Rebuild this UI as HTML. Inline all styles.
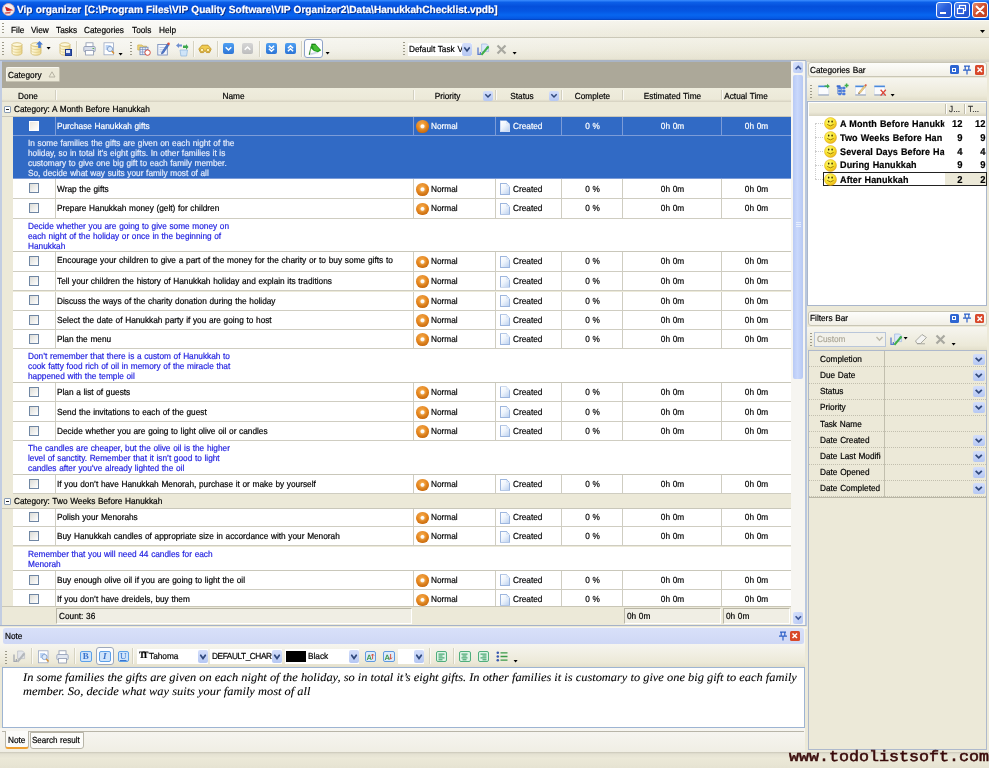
<!DOCTYPE html><html><head><meta charset="utf-8"><title>Vip organizer</title><style>
*{box-sizing:border-box;margin:0;padding:0}
html,body{width:989px;height:768px;overflow:hidden;background:#ECE9D8}
body{text-rendering:geometricPrecision;font-family:"Liberation Sans",sans-serif;font-size:8.8px;color:#000;position:relative;line-height:1}
.ab{position:absolute}
.t{position:absolute;white-space:nowrap;line-height:12px;height:12px;transform:scaleX(.94);transform-origin:0 50%;word-spacing:.4px;-webkit-text-stroke:.2px currentColor}
.c{text-align:center}
.t.c{transform-origin:50% 50%}
.t.r{text-align:right;transform-origin:100% 50%}
.nt{display:block;transform:scaleX(.94);transform-origin:0 0;word-spacing:.4px;-webkit-text-stroke:.2px currentColor}
.w{color:#fff}
.row{position:absolute;left:11px;width:778px;background:#fff;border-bottom:1px solid #CFCDC1}
.sel{background:#316AC5;color:#fff;border-bottom-color:#7C9CD8}
.vl{position:absolute;top:0;bottom:0;width:1px;background:#CFCDC1}
.sel .vl{background:#7C9CD8}
.cb{position:absolute;left:15.5px;width:10px;height:10px;border:1px solid #6F86A3;background:linear-gradient(135deg,#DCDCD7,#FFFFFF)}
.sel .cb{border-color:#fff;background:linear-gradient(135deg,#E8E6DF,#FFFFFF)}
.note{position:absolute;left:11px;width:778px;background:#fff;border-bottom:1px solid #C9C7BA;color:#1F1FE0;padding:2.4px 0 0 15px;line-height:10.05px;white-space:pre}
.note.sel{background:#316AC5;color:#E6ECFA;border-bottom-color:#7C9CD8}
.grp{position:absolute;left:0px;width:789px;background:#ECE9D8;border-bottom:1px solid #C9C7BA}
.pm{position:absolute;left:1.8px;top:3.6px;width:7px;height:7px;border:1px solid #8A9DB5;background:#fff;border-radius:1px}
.pm:after{content:"";position:absolute;left:1px;right:1px;top:2px;height:1px;background:#222}
.pri{position:absolute;left:403.1px;width:12.7px;height:12.7px;border-radius:50%;background:linear-gradient(160deg,rgba(255,220,160,.35) 0,rgba(255,255,255,0) 45%,rgba(120,50,0,.28) 100%),radial-gradient(circle at 50% 49%,#fff 0,#fff 16%,#FBD8A8 21%,#F2A444 27%,#EA8C22 45%,#DE7A12 72%,#C86608 100%)}
.doc{position:absolute;left:487px;width:10px;height:12px;background:linear-gradient(135deg,#fff 0,#EEF4FC 45%,#BDD2F0 100%);border:1px solid #9DB6DE;clip-path:polygon(0 0,62% 0,100% 32%,100% 100%,0 100%)}
.doc:after{content:"";position:absolute;right:-1px;top:-1px;width:4px;height:4px;background:linear-gradient(45deg,#DCE8F8 50%,#9DB6DE 50%,#9DB6DE 62%,transparent 62%)}
.sel .doc{border-color:#D0DDF5}
.dd{position:absolute;width:10px;height:10px;background:linear-gradient(#D3DEFB,#B6C8F3);border-radius:2px}
.dd svg{position:absolute;left:0;top:0}
.sep{position:absolute;width:1px;background:#D6D3C2;box-shadow:1px 0 0 #FAF9F4}
.grip{position:absolute;width:1.6px;background-image:linear-gradient(#9C9988 45%,transparent 45%);background-size:2px 3px}
</style></head><body><div id="root" style="position:absolute;left:0;top:0;width:989px;height:768px;will-change:transform">
<div class="ab" style="left:0;top:0;width:989px;height:20px;background:linear-gradient(#3D8EFF 0,#2276F4 6%,#0C5FE8 12%,#044FDB 32%,#0556E2 55%,#0766F0 75%,#0558E4 92%,#0340B8 100%)"></div>
<svg class="ab" style="left:2px;top:3px" width="13" height="13" viewBox="0 0 13 13"><circle cx="6.5" cy="6.5" r="6" fill="#F4ECEC" stroke="#D8A8A8" stroke-width=".9"/><path d="M3 3.6 L11.4 7.2 L4.6 8.2 Z" fill="#D02020"/><path d="M2.6 9.6 L9 8.6 L8 10.6 L3.4 10.8 Z" fill="#C83030" opacity=".8"/></svg>
<div class="t w" id="title" style="left:17px;top:3.9px;font-weight:bold;font-size:10.3px;line-height:14px;height:14px;text-shadow:1px 1px 0 #0A2A80;transform:scaleX(.982)">Vip organizer [C:\Program Files\VIP Quality Software\VIP Organizer2\Data\HanukkahChecklist.vpdb]</div>
<div class="ab" style="left:935.5px;top:1.5px;width:16px;height:16px;border:1px solid #fff;border-radius:3px;background:linear-gradient(135deg,#5C8EF0 0,#2C60DC 45%,#2250C8 100%);opacity:.97"></div>
<div class="ab" style="left:953.5px;top:1.5px;width:16px;height:16px;border:1px solid #fff;border-radius:3px;background:linear-gradient(135deg,#5C8EF0 0,#2C60DC 45%,#2250C8 100%);opacity:.97"></div>
<div class="ab" style="left:971.5px;top:1.5px;width:16px;height:16px;border:1px solid #fff;border-radius:3px;background:linear-gradient(135deg,#E8906C 0,#D8502A 45%,#C43C18 100%);opacity:.97"></div>
<div class="ab" style="left:939.5px;top:11.5px;width:6px;height:2.4px;background:#fff"></div>
<svg class="ab" style="left:956px;top:4px" width="11" height="11" viewBox="0 0 11 11"><rect x="3.5" y="1.5" width="6" height="5" fill="none" stroke="#fff" stroke-width="1.2"/><rect x="1.5" y="4.5" width="6" height="5" fill="#2C60DC" stroke="#fff" stroke-width="1.2"/></svg>
<svg class="ab" style="left:974.5px;top:4.5px" width="10" height="10" viewBox="0 0 10 10"><path d="M1.5 1.5 L8.5 8.5 M8.5 1.5 L1.5 8.5" stroke="#fff" stroke-width="1.9" stroke-linecap="round"/></svg>
<div class="ab" style="left:0;top:19.6px;width:989px;height:18.4px;background:linear-gradient(#FFFFFF 0,rgba(255,255,255,.35) 8%,rgba(255,255,255,0) 60%,rgba(200,190,150,.08) 100%),linear-gradient(90deg,#F8F8F4 0,#F5F4EE 35%,#F0EEE2 65%,#ECE9D8 100%);border-bottom:1px solid #CBC8B8"></div>
<div class="grip" style="left:2px;top:23px;height:12px"></div>
<div class="t" style="left:11px;top:23.5px">File</div>
<div class="t" style="left:31px;top:23.5px">View</div>
<div class="t" style="left:56px;top:23.5px">Tasks</div>
<div class="t" style="left:84px;top:23.5px">Categories</div>
<div class="t" style="left:132px;top:23.5px">Tools</div>
<div class="t" style="left:159px;top:23.5px">Help</div>
<svg class="ab" style="left:980px;top:30px" width="6" height="4"><path d="M0 0 L5 0 L2.5 3 Z" fill="#000"/></svg>
<div class="ab" style="left:0;top:38px;width:989px;height:20.6px;background:linear-gradient(rgba(255,255,255,.3) 0,rgba(255,255,255,0) 50%,rgba(190,180,140,.16) 100%),linear-gradient(90deg,#F6F5EF 0,#F3F2EA 35%,#EFEDE0 65%,#ECE9D8 100%)"></div>
<div class="ab" style="left:0;top:58.6px;width:989px;height:3.4px;background:linear-gradient(#E0DDCD,#D2CFC2)"></div><div class="ab" style="left:0;top:60.4px;width:806px;height:1.6px;background:#A9B4C6"></div>
<div class="grip" style="left:2px;top:42px;height:14px"></div>
<div class="grip" style="left:130px;top:42px;height:14px"></div>
<div class="grip" style="left:403px;top:42px;height:14px"></div>
<div class="sep" style="left:76px;top:41px;height:16px"></div>
<div class="sep" style="left:192.5px;top:41px;height:16px"></div>
<div class="sep" style="left:216.5px;top:41px;height:16px"></div>
<div class="sep" style="left:259px;top:41px;height:16px"></div>
<div class="sep" style="left:301px;top:41px;height:16px"></div>
<svg width="0" height="0" style="position:absolute"><defs><linearGradient id="dbg" x1="0" x2="1"><stop offset="0" stop-color="#FFFBE6"/><stop offset=".45" stop-color="#F8EDBE"/><stop offset="1" stop-color="#EBD58A"/></linearGradient></defs></svg>
<svg class="ab" style="left:10.5px;top:42px" width="12" height="14" viewBox="0 0 12 14"><path d="M1 2.5 V11 C1 12.3 3.2 13.2 6 13.2 S11 12.3 11 11 V2.5 Z" fill="url(#dbg)" stroke="#D2B96A" stroke-width=".8"/><ellipse cx="6" cy="2.6" rx="5" ry="1.9" fill="#FDF8DC" stroke="#D2B96A" stroke-width=".8"/><path d="M1 5.5 C1 6.8 3.2 7.6 6 7.6 S11 6.8 11 5.5 M1 8.3 C1 9.6 3.2 10.4 6 10.4 S11 9.6 11 8.3" fill="none" stroke="#DCC67C" stroke-width=".6"/></svg>
<svg class="ab" style="left:29.5px;top:42px" width="12" height="14" viewBox="0 0 12 14"><path d="M1 2.5 V11 C1 12.3 3.2 13.2 6 13.2 S11 12.3 11 11 V2.5 Z" fill="url(#dbg)" stroke="#D2B96A" stroke-width=".8"/><ellipse cx="6" cy="2.6" rx="5" ry="1.9" fill="#FDF8DC" stroke="#D2B96A" stroke-width=".8"/><path d="M1 5.5 C1 6.8 3.2 7.6 6 7.6 S11 6.8 11 5.5 M1 8.3 C1 9.6 3.2 10.4 6 10.4 S11 9.6 11 8.3" fill="none" stroke="#DCC67C" stroke-width=".6"/></svg>
<svg class="ab" style="left:58.5px;top:42px" width="12" height="14" viewBox="0 0 12 14"><path d="M1 2.5 V11 C1 12.3 3.2 13.2 6 13.2 S11 12.3 11 11 V2.5 Z" fill="url(#dbg)" stroke="#D2B96A" stroke-width=".8"/><ellipse cx="6" cy="2.6" rx="5" ry="1.9" fill="#FDF8DC" stroke="#D2B96A" stroke-width=".8"/><path d="M1 5.5 C1 6.8 3.2 7.6 6 7.6 S11 6.8 11 5.5 M1 8.3 C1 9.6 3.2 10.4 6 10.4 S11 9.6 11 8.3" fill="none" stroke="#DCC67C" stroke-width=".6"/></svg>
<svg class="ab" style="left:35.5px;top:41px" width="7" height="7"><path d="M3.5 0 L7 3.5 L4.8 3.5 L4.8 7 L2.2 7 L2.2 3.5 L0 3.5 Z" fill="#4A7CD4"/></svg>
<svg class="ab" style="left:46px;top:47px" width="6" height="4"><path d="M0.6 0 L4.6 0 L2.6 2.6 Z" fill="#000"/></svg>
<div class="ab" style="left:64.5px;top:49px;width:7px;height:7px;background:#3556B0;border:1px solid #1E3A8C"></div><div class="ab" style="left:66px;top:50px;width:4px;height:2.5px;background:#E4EAF8"></div>
<svg class="ab" style="left:82.5px;top:42px" width="13" height="14" viewBox="0 0 13 14"><rect x="3" y="0.8" width="7" height="4" fill="#fff" stroke="#8A96AE" stroke-width=".8"/><rect x="0.8" y="4.5" width="11.4" height="5.2" rx="1" fill="#D8DEEA" stroke="#8A96B0" stroke-width=".8"/><rect x="2.6" y="8.5" width="7.8" height="4.5" fill="#fff" stroke="#8A96AE" stroke-width=".8"/><rect x="9.5" y="6" width="1.6" height="1" fill="#58B048"/></svg>
<svg class="ab" style="left:102.5px;top:42px" width="12" height="14" viewBox="0 0 12 14"><rect x="1" y="0.8" width="9.5" height="12" fill="#fff" stroke="#9AA8C4" stroke-width=".8"/><rect x="2.6" y="3" width="5" height="5" fill="#BCD4F4"/><circle cx="7" cy="7" r="2.6" fill="#DDEBFB" stroke="#7E9CCB" stroke-width=".9"/><path d="M8.8 9 L11 11.6" stroke="#D89030" stroke-width="1.5"/></svg>
<svg class="ab" style="left:118px;top:52.5px" width="6" height="4"><path d="M0.6 0 L4.6 0 L2.6 2.6 Z" fill="#000"/></svg>
<svg class="ab" style="left:137px;top:42px" width="14" height="14" viewBox="0 0 14 14"><path d="M0.8 3 H5 L6 4.2 H9.5 V8 H0.8 Z" fill="#F5DC7A" stroke="#C9A94A" stroke-width=".7"/><rect x="3" y="5.2" width="8" height="7.5" fill="#E7EEF9" stroke="#6E86B8" stroke-width=".8"/><path d="M3 7.5 H11 M5.6 5.2 V12.7 M8.3 5.2 V12.7 M3 10 H11" stroke="#6E86B8" stroke-width=".6"/><circle cx="10.6" cy="10.6" r="2.7" fill="#fff" stroke="#D23C2C" stroke-width=".9"/></svg>
<svg class="ab" style="left:156.5px;top:42px" width="13" height="14" viewBox="0 0 13 14"><rect x="0.8" y="2.5" width="9.5" height="10.5" fill="#F3F6FC" stroke="#6E86B8" stroke-width=".8"/><path d="M2.5 5.5 H8 M2.5 7.7 H7 M2.5 9.9 H6" stroke="#A9BCDD" stroke-width=".7"/><path d="M4.8 10.2 L10.6 1.6 L12.2 2.8 L6.4 11.2 L4.4 12 Z" fill="#4E78CC" stroke="#2C4C98" stroke-width=".5"/><circle cx="11.6" cy="1.8" r="1.2" fill="#E05038"/></svg>
<svg class="ab" style="left:174.5px;top:41.5px" width="14" height="15" viewBox="0 0 14 15"><path d="M5 8 H12.5 L11.6 14 H5.9 Z" fill="#CFE4F8" stroke="#8CB4DC" stroke-width=".7"/><path d="M1 3.5 L4 1 L4 2.6 L7 2.6 L7 4.6 L4 4.6 L4 6 Z" fill="#6F8ED0"/><path d="M8 3.5 L11 3.5 L11 2 L13.5 5 L11 7.8 L11 6 L8 6 Z" fill="#3DA84C"/></svg>
<svg class="ab" style="left:198px;top:44px" width="14" height="10" viewBox="0 0 14 10"><path d="M0.8 5 L4 1.2 H10 L13.2 5 L11.5 8.6 H8.5 L7 6.4 L5.5 8.6 H2.5 Z" fill="#F1CC50" stroke="#B98A1C" stroke-width=".8"/><circle cx="4" cy="6" r="1.7" fill="#FFF0B0" stroke="#B98A1C" stroke-width=".6"/><circle cx="10" cy="6" r="1.7" fill="#FFF0B0" stroke="#B98A1C" stroke-width=".6"/></svg>
<div class="ab" style="left:223px;top:43.3px;width:11px;height:11px;border-radius:2px;background:linear-gradient(#4FA0F2,#2C74D6)"></div>
<svg class="ab" style="left:223px;top:43.3px" width="11" height="11" viewBox="0 0 11 11"><path d="M2.7 4.2 L5.5 7 L8.3 4.2" fill="none" stroke="#fff" stroke-width="1.5"/></svg>
<div class="ab" style="left:242px;top:43.3px;width:11px;height:11px;border-radius:2px;background:linear-gradient(#D6D6D6,#BDBDBD)"></div>
<svg class="ab" style="left:242px;top:43.3px" width="11" height="11" viewBox="0 0 11 11"><path d="M2.7 6.8 L5.5 4 L8.3 6.8" fill="none" stroke="#fff" stroke-width="1.5"/></svg>
<div class="ab" style="left:266px;top:43.3px;width:11px;height:11px;border-radius:2px;background:linear-gradient(#4FA0F2,#2C74D6)"></div>
<svg class="ab" style="left:266px;top:43.3px" width="11" height="11" viewBox="0 0 11 11"><path d="M2.9 2.8 L5.5 5.3 L8.1 2.8 M2.9 5.8 L5.5 8.3 L8.1 5.8" fill="none" stroke="#fff" stroke-width="1.5"/></svg>
<div class="ab" style="left:284.5px;top:43.3px;width:11px;height:11px;border-radius:2px;background:linear-gradient(#4FA0F2,#2C74D6)"></div>
<svg class="ab" style="left:284.5px;top:43.3px" width="11" height="11" viewBox="0 0 11 11"><path d="M2.9 5.2 L5.5 2.7 L8.1 5.2 M2.9 8.2 L5.5 5.7 L8.1 8.2" fill="none" stroke="#fff" stroke-width="1.5"/></svg>
<div class="ab" style="left:304.2px;top:39.2px;width:18.6px;height:18.5px;border:1px solid #8FA3C8;border-radius:3px;background:#FDFDFE"></div>
<svg class="ab" style="left:307.5px;top:42px" width="14" height="14" viewBox="0 0 14 14"><path d="M2.3 13.4 L10.4 11 L10 10 L2.7 11.6 Z" fill="#D8E0EC"/><path d="M2.6 11.8 L9.8 9.8" stroke="#B8C4D8" stroke-width=".6"/><path d="M3.5 2.1 L7.5 2.1 L13.2 8.2 L10 10.2 L5.9 9 L2.6 5.9 Z" fill="#22A01E"/><path d="M4.4 3 L7.2 2.8 L11.6 7.8 L9.6 9 L6.2 8 Z" fill="#52C43C" opacity=".8"/><path d="M3.5 2.1 L7.5 2.1" stroke="#14600F" stroke-width=".8"/><path d="M3.3 2.3 L0.7 12.6 L2 13 L2.9 6.2 Z" fill="#2F8C2A"/></svg>
<svg class="ab" style="left:324.7px;top:52px" width="6" height="4"><path d="M0.6 0 L4.6 0 L2.6 2.6 Z" fill="#000"/></svg>
<div class="ab" style="left:408px;top:42.5px;width:64px;height:13.5px;background:#fff"></div>
<div class="t" style="left:409px;top:42.6px;width:56.5px;overflow:hidden">Default Task V</div>
<div class="dd" style="left:462px;top:43px;width:10px;height:12.5px;opacity:1"><svg width="10" height="12.5" viewBox="0 0 10 10" preserveAspectRatio="none"><path d="M2.3 3.5 L5 6.3 L7.7 3.5" fill="none" stroke="#31497C" stroke-width="1.5"/></svg></div>
<svg class="ab" style="left:477px;top:42.5px" width="13" height="13" viewBox="0 0 13 13"><path d="M4.6 1 H9.6 L11.6 3 V8.6 H4.6 Z" fill="#DCE8FA" stroke="#9CB4E0" stroke-width=".7"/><path d="M1 4.6 V11.4 H3.4 V9" fill="none" stroke="#5C7CD0" stroke-width="1.3"/><path d="M3.6 11.2 L9.8 3.8 L11.4 5.2 L5.2 12.4 Z" fill="#3FAE4A"/><circle cx="10.8" cy="4.2" r="1.2" fill="#3FAE4A"/></svg>
<svg class="ab" style="left:496px;top:43.5px" width="11" height="11" viewBox="0 0 11 11"><path d="M1.5 1.5 L9.5 9.5 M9.5 1.5 L1.5 9.5" stroke="#A8A8A0" stroke-width="2.2"/></svg>
<svg class="ab" style="left:512px;top:52px" width="6" height="4"><path d="M0.6 0 L4.6 0 L2.6 2.6 Z" fill="#000"/></svg>
<div class="ab" style="left:0;top:61px;width:1.8px;height:565px;background:#C2CDE2"></div>
<div class="ab" style="left:2px;top:62px;width:789px;height:26px;background:#ACA899"></div>
<div class="ab" style="left:6px;top:67px;width:54px;height:15px;background:#ECE9D8;border:1px solid #F8F7F0;border-right-color:#C6C3B2;border-bottom-color:#C6C3B2;border-radius:2px"></div>
<div class="t" style="left:8px;top:69px">Category</div>
<svg class="ab" style="left:47.5px;top:70.5px" width="8" height="7"><path d="M4 0.8 L7 6 L1 6 Z" fill="none" stroke="#B5B2A3" stroke-width="1"/></svg>
<div class="ab" style="left:2px;top:88px;width:789px;height:14px;background:linear-gradient(#EFEDDE 0,#ECE9D8 80%,#E0DCCB 92%,#D3CFBF 100%)"></div>
<div class="ab" style="left:54.7px;top:90px;width:1px;height:10px;background:#D2CFC0;box-shadow:1px 0 0 #FBFAF6"></div>
<div class="ab" style="left:412.8px;top:90px;width:1px;height:10px;background:#D2CFC0;box-shadow:1px 0 0 #FBFAF6"></div>
<div class="ab" style="left:494.8px;top:90px;width:1px;height:10px;background:#D2CFC0;box-shadow:1px 0 0 #FBFAF6"></div>
<div class="ab" style="left:561.3px;top:90px;width:1px;height:10px;background:#D2CFC0;box-shadow:1px 0 0 #FBFAF6"></div>
<div class="ab" style="left:622.3px;top:90px;width:1px;height:10px;background:#D2CFC0;box-shadow:1px 0 0 #FBFAF6"></div>
<div class="ab" style="left:721.3px;top:90px;width:1px;height:10px;background:#D2CFC0;box-shadow:1px 0 0 #FBFAF6"></div>
<div class="t c" style="left:2px;width:52px;top:89.5px">Done</div>
<div class="t c" style="left:54px;width:359px;top:89.5px">Name</div>
<div class="t c" style="left:413px;width:69px;top:89.5px">Priority</div>
<div class="t c" style="left:495px;width:54px;top:89.5px">Status</div>
<div class="t c" style="left:562px;width:61px;top:89.5px">Complete</div>
<div class="t c" style="left:623px;width:99px;top:89.5px">Estimated Time</div>
<div class="t c" style="left:722px;width:48px;top:89.5px">Actual Time</div>
<div class="dd" style="left:483px;top:91px;width:10px;height:9.5px;opacity:1"><svg width="10" height="9.5" viewBox="0 0 10 10" preserveAspectRatio="none"><path d="M2.3 3.5 L5 6.3 L7.7 3.5" fill="none" stroke="#31497C" stroke-width="1.5"/></svg></div>
<div class="dd" style="left:549px;top:91px;width:10px;height:9.5px;opacity:1"><svg width="10" height="9.5" viewBox="0 0 10 10" preserveAspectRatio="none"><path d="M2.3 3.5 L5 6.3 L7.7 3.5" fill="none" stroke="#31497C" stroke-width="1.5"/></svg></div>
<div class="ab" style="left:2px;top:102.5px;width:789px;height:503.5px;overflow:hidden;background:#ECE9D8">
<div class="grp" style="top:0.0px;height:14.8px"><div class="pm"></div><div class="t" style="left:12px;top:0.9px">Category: A Month Before Hanukkah</div></div>
<div class="row sel" style="top:14.8px;height:18.4px"><div class="cb" style="top:3.4px"></div><div class="vl" style="left:41.7px"></div><div class="vl" style="left:399.8px"></div><div class="vl" style="left:481.8px"></div><div class="vl" style="left:548.3px"></div><div class="vl" style="left:609.3px"></div><div class="vl" style="left:708.3px"></div><div class="t" style="left:44px;top:2.7px">Purchase Hanukkah gifts</div><div class="pri" style="top:3.0px"></div><div class="t" style="left:418px;top:2.7px">Normal</div><div class="doc" style="top:3.1px"></div><div class="t" style="left:500px;top:2.7px">Created</div><div class="t c" style="left:549px;width:61px;top:2.7px">0 %</div><div class="t c" style="left:610px;width:99px;top:2.7px">0h 0m</div><div class="t c" style="left:709px;width:69px;top:2.7px">0h 0m</div></div>
<div class="note sel" style="top:33.2px;height:43.5px"><span class="nt">In some families the gifts are given on each night of the
holiday, so in total it’s eight gifts. In other families it is
customary to give one big gift to each family member.
So, decide what way suits your family most of all</span></div>
<div class="row" style="top:76.7px;height:19.8px"><div class="cb" style="top:4.1px"></div><div class="vl" style="left:41.7px"></div><div class="vl" style="left:399.8px"></div><div class="vl" style="left:481.8px"></div><div class="vl" style="left:548.3px"></div><div class="vl" style="left:609.3px"></div><div class="vl" style="left:708.3px"></div><div class="t" style="left:44px;top:3.4px">Wrap the gifts</div><div class="pri" style="top:3.7px"></div><div class="t" style="left:418px;top:3.4px">Normal</div><div class="doc" style="top:3.8px"></div><div class="t" style="left:500px;top:3.4px">Created</div><div class="t c" style="left:549px;width:61px;top:3.4px">0 %</div><div class="t c" style="left:610px;width:99px;top:3.4px">0h 0m</div><div class="t c" style="left:709px;width:69px;top:3.4px">0h 0m</div></div>
<div class="row" style="top:96.5px;height:19.5px"><div class="cb" style="top:4.0px"></div><div class="vl" style="left:41.7px"></div><div class="vl" style="left:399.8px"></div><div class="vl" style="left:481.8px"></div><div class="vl" style="left:548.3px"></div><div class="vl" style="left:609.3px"></div><div class="vl" style="left:708.3px"></div><div class="t" style="left:44px;top:3.2px">Prepare Hanukkah money (gelt) for children</div><div class="pri" style="top:3.5px"></div><div class="t" style="left:418px;top:3.2px">Normal</div><div class="doc" style="top:3.7px"></div><div class="t" style="left:500px;top:3.2px">Created</div><div class="t c" style="left:549px;width:61px;top:3.2px">0 %</div><div class="t c" style="left:610px;width:99px;top:3.2px">0h 0m</div><div class="t c" style="left:709px;width:69px;top:3.2px">0h 0m</div></div>
<div class="note" style="top:116.0px;height:33.6px"><span class="nt">Decide whether you are going to give some money on
each night of the holiday or once in the beginning of
Hanukkah</span></div>
<div class="row" style="top:149.6px;height:19.8px"><div class="cb" style="top:4.1px"></div><div class="vl" style="left:41.7px"></div><div class="vl" style="left:399.8px"></div><div class="vl" style="left:481.8px"></div><div class="vl" style="left:548.3px"></div><div class="vl" style="left:609.3px"></div><div class="vl" style="left:708.3px"></div><div class="t" style="left:44px;top:2.2px;transform:scaleX(.9493)">Encourage your children to give a part of the money for the charity or to buy some gifts to</div><div class="pri" style="top:3.7px"></div><div class="t" style="left:418px;top:3.4px">Normal</div><div class="doc" style="top:3.8px"></div><div class="t" style="left:500px;top:3.4px">Created</div><div class="t c" style="left:549px;width:61px;top:3.4px">0 %</div><div class="t c" style="left:610px;width:99px;top:3.4px">0h 0m</div><div class="t c" style="left:709px;width:69px;top:3.4px">0h 0m</div></div>
<div class="row" style="top:169.4px;height:19.6px"><div class="cb" style="top:4.0px"></div><div class="vl" style="left:41.7px"></div><div class="vl" style="left:399.8px"></div><div class="vl" style="left:481.8px"></div><div class="vl" style="left:548.3px"></div><div class="vl" style="left:609.3px"></div><div class="vl" style="left:708.3px"></div><div class="t" style="left:44px;top:3.3px">Tell your children the history of Hanukkah holiday and explain its traditions</div><div class="pri" style="top:3.6px"></div><div class="t" style="left:418px;top:3.3px">Normal</div><div class="doc" style="top:3.7px"></div><div class="t" style="left:500px;top:3.3px">Created</div><div class="t c" style="left:549px;width:61px;top:3.3px">0 %</div><div class="t c" style="left:610px;width:99px;top:3.3px">0h 0m</div><div class="t c" style="left:709px;width:69px;top:3.3px">0h 0m</div></div>
<div class="row" style="top:189.0px;height:19.2px"><div class="cb" style="top:3.8px"></div><div class="vl" style="left:41.7px"></div><div class="vl" style="left:399.8px"></div><div class="vl" style="left:481.8px"></div><div class="vl" style="left:548.3px"></div><div class="vl" style="left:609.3px"></div><div class="vl" style="left:708.3px"></div><div class="t" style="left:44px;top:3.1px">Discuss the ways of the charity donation during the holiday</div><div class="pri" style="top:3.4px"></div><div class="t" style="left:418px;top:3.1px">Normal</div><div class="doc" style="top:3.5px"></div><div class="t" style="left:500px;top:3.1px">Created</div><div class="t c" style="left:549px;width:61px;top:3.1px">0 %</div><div class="t c" style="left:610px;width:99px;top:3.1px">0h 0m</div><div class="t c" style="left:709px;width:69px;top:3.1px">0h 0m</div></div>
<div class="row" style="top:208.2px;height:19.3px"><div class="cb" style="top:3.9px"></div><div class="vl" style="left:41.7px"></div><div class="vl" style="left:399.8px"></div><div class="vl" style="left:481.8px"></div><div class="vl" style="left:548.3px"></div><div class="vl" style="left:609.3px"></div><div class="vl" style="left:708.3px"></div><div class="t" style="left:44px;top:3.2px">Select the date of Hanukkah party if you are going to host</div><div class="pri" style="top:3.5px"></div><div class="t" style="left:418px;top:3.2px">Normal</div><div class="doc" style="top:3.6px"></div><div class="t" style="left:500px;top:3.2px">Created</div><div class="t c" style="left:549px;width:61px;top:3.2px">0 %</div><div class="t c" style="left:610px;width:99px;top:3.2px">0h 0m</div><div class="t c" style="left:709px;width:69px;top:3.2px">0h 0m</div></div>
<div class="row" style="top:227.5px;height:18.9px"><div class="cb" style="top:3.6px"></div><div class="vl" style="left:41.7px"></div><div class="vl" style="left:399.8px"></div><div class="vl" style="left:481.8px"></div><div class="vl" style="left:548.3px"></div><div class="vl" style="left:609.3px"></div><div class="vl" style="left:708.3px"></div><div class="t" style="left:44px;top:2.9px">Plan the menu</div><div class="pri" style="top:3.2px"></div><div class="t" style="left:418px;top:2.9px">Normal</div><div class="doc" style="top:3.3px"></div><div class="t" style="left:500px;top:2.9px">Created</div><div class="t c" style="left:549px;width:61px;top:2.9px">0 %</div><div class="t c" style="left:610px;width:99px;top:2.9px">0h 0m</div><div class="t c" style="left:709px;width:69px;top:2.9px">0h 0m</div></div>
<div class="note" style="top:246.4px;height:33.9px"><span class="nt">Don’t remember that there is a custom of Hanukkah to
cook fatty food rich of oil in memory of the miracle that
happened with the temple oil</span></div>
<div class="row" style="top:280.3px;height:19.5px"><div class="cb" style="top:4.0px"></div><div class="vl" style="left:41.7px"></div><div class="vl" style="left:399.8px"></div><div class="vl" style="left:481.8px"></div><div class="vl" style="left:548.3px"></div><div class="vl" style="left:609.3px"></div><div class="vl" style="left:708.3px"></div><div class="t" style="left:44px;top:3.2px">Plan a list of guests</div><div class="pri" style="top:3.5px"></div><div class="t" style="left:418px;top:3.2px">Normal</div><div class="doc" style="top:3.7px"></div><div class="t" style="left:500px;top:3.2px">Created</div><div class="t c" style="left:549px;width:61px;top:3.2px">0 %</div><div class="t c" style="left:610px;width:99px;top:3.2px">0h 0m</div><div class="t c" style="left:709px;width:69px;top:3.2px">0h 0m</div></div>
<div class="row" style="top:299.8px;height:19.6px"><div class="cb" style="top:4.0px"></div><div class="vl" style="left:41.7px"></div><div class="vl" style="left:399.8px"></div><div class="vl" style="left:481.8px"></div><div class="vl" style="left:548.3px"></div><div class="vl" style="left:609.3px"></div><div class="vl" style="left:708.3px"></div><div class="t" style="left:44px;top:3.3px">Send the invitations to each of the guest</div><div class="pri" style="top:3.6px"></div><div class="t" style="left:418px;top:3.3px">Normal</div><div class="doc" style="top:3.7px"></div><div class="t" style="left:500px;top:3.3px">Created</div><div class="t c" style="left:549px;width:61px;top:3.3px">0 %</div><div class="t c" style="left:610px;width:99px;top:3.3px">0h 0m</div><div class="t c" style="left:709px;width:69px;top:3.3px">0h 0m</div></div>
<div class="row" style="top:319.4px;height:19.0px"><div class="cb" style="top:3.7px"></div><div class="vl" style="left:41.7px"></div><div class="vl" style="left:399.8px"></div><div class="vl" style="left:481.8px"></div><div class="vl" style="left:548.3px"></div><div class="vl" style="left:609.3px"></div><div class="vl" style="left:708.3px"></div><div class="t" style="left:44px;top:3.0px">Decide whether you are going to light olive oil or candles</div><div class="pri" style="top:3.3px"></div><div class="t" style="left:418px;top:3.0px">Normal</div><div class="doc" style="top:3.4px"></div><div class="t" style="left:500px;top:3.0px">Created</div><div class="t c" style="left:549px;width:61px;top:3.0px">0 %</div><div class="t c" style="left:610px;width:99px;top:3.0px">0h 0m</div><div class="t c" style="left:709px;width:69px;top:3.0px">0h 0m</div></div>
<div class="note" style="top:338.4px;height:34.3px"><span class="nt">The candles are cheaper, but the olive oil is the higher
level of sanctity. Remember that it isn’t good to light
candles after you’ve already lighted the oil</span></div>
<div class="row" style="top:372.7px;height:19.1px"><div class="cb" style="top:3.8px"></div><div class="vl" style="left:41.7px"></div><div class="vl" style="left:399.8px"></div><div class="vl" style="left:481.8px"></div><div class="vl" style="left:548.3px"></div><div class="vl" style="left:609.3px"></div><div class="vl" style="left:708.3px"></div><div class="t" style="left:44px;top:3.1px">If you don’t have Hanukkah Menorah, purchase it or make by yourself</div><div class="pri" style="top:3.4px"></div><div class="t" style="left:418px;top:3.1px">Normal</div><div class="doc" style="top:3.5px"></div><div class="t" style="left:500px;top:3.1px">Created</div><div class="t c" style="left:549px;width:61px;top:3.1px">0 %</div><div class="t c" style="left:610px;width:99px;top:3.1px">0h 0m</div><div class="t c" style="left:709px;width:69px;top:3.1px">0h 0m</div></div>
<div class="grp" style="top:391.8px;height:14.4px"><div class="pm"></div><div class="t" style="left:12px;top:0.7px">Category: Two Weeks Before Hanukkah</div></div>
<div class="row" style="top:406.2px;height:18.5px"><div class="cb" style="top:3.5px"></div><div class="vl" style="left:41.7px"></div><div class="vl" style="left:399.8px"></div><div class="vl" style="left:481.8px"></div><div class="vl" style="left:548.3px"></div><div class="vl" style="left:609.3px"></div><div class="vl" style="left:708.3px"></div><div class="t" style="left:44px;top:2.8px">Polish your Menorahs</div><div class="pri" style="top:3.1px"></div><div class="t" style="left:418px;top:2.8px">Normal</div><div class="doc" style="top:3.2px"></div><div class="t" style="left:500px;top:2.8px">Created</div><div class="t c" style="left:549px;width:61px;top:2.8px">0 %</div><div class="t c" style="left:610px;width:99px;top:2.8px">0h 0m</div><div class="t c" style="left:709px;width:69px;top:2.8px">0h 0m</div></div>
<div class="row" style="top:424.7px;height:19.3px"><div class="cb" style="top:3.8px"></div><div class="vl" style="left:41.7px"></div><div class="vl" style="left:399.8px"></div><div class="vl" style="left:481.8px"></div><div class="vl" style="left:548.3px"></div><div class="vl" style="left:609.3px"></div><div class="vl" style="left:708.3px"></div><div class="t" style="left:44px;top:3.1px">Buy Hanukkah candles of appropriate size in accordance with your Menorah</div><div class="pri" style="top:3.4px"></div><div class="t" style="left:418px;top:3.1px">Normal</div><div class="doc" style="top:3.5px"></div><div class="t" style="left:500px;top:3.1px">Created</div><div class="t c" style="left:549px;width:61px;top:3.1px">0 %</div><div class="t c" style="left:610px;width:99px;top:3.1px">0h 0m</div><div class="t c" style="left:709px;width:69px;top:3.1px">0h 0m</div></div>
<div class="note" style="top:444.0px;height:24.0px"><span class="nt">Remember that you will need 44 candles for each
Menorah</span></div>
<div class="row" style="top:468.0px;height:19.5px"><div class="cb" style="top:4.0px"></div><div class="vl" style="left:41.7px"></div><div class="vl" style="left:399.8px"></div><div class="vl" style="left:481.8px"></div><div class="vl" style="left:548.3px"></div><div class="vl" style="left:609.3px"></div><div class="vl" style="left:708.3px"></div><div class="t" style="left:44px;top:3.2px">Buy enough olive oil if you are going to light the oil</div><div class="pri" style="top:3.5px"></div><div class="t" style="left:418px;top:3.2px">Normal</div><div class="doc" style="top:3.7px"></div><div class="t" style="left:500px;top:3.2px">Created</div><div class="t c" style="left:549px;width:61px;top:3.2px">0 %</div><div class="t c" style="left:610px;width:99px;top:3.2px">0h 0m</div><div class="t c" style="left:709px;width:69px;top:3.2px">0h 0m</div></div>
<div class="row" style="top:487.5px;height:19.5px"><div class="cb" style="top:4.0px"></div><div class="vl" style="left:41.7px"></div><div class="vl" style="left:399.8px"></div><div class="vl" style="left:481.8px"></div><div class="vl" style="left:548.3px"></div><div class="vl" style="left:609.3px"></div><div class="vl" style="left:708.3px"></div><div class="t" style="left:44px;top:3.2px">If you don’t have dreidels, buy them</div><div class="pri" style="top:3.5px"></div><div class="t" style="left:418px;top:3.2px">Normal</div><div class="doc" style="top:3.7px"></div><div class="t" style="left:500px;top:3.2px">Created</div><div class="t c" style="left:549px;width:61px;top:3.2px">0 %</div><div class="t c" style="left:610px;width:99px;top:3.2px">0h 0m</div><div class="t c" style="left:709px;width:69px;top:3.2px">0h 0m</div></div>
</div>
<div class="ab" style="left:2px;top:606px;width:789px;height:19px;background:#ECE9D8;border-top:1px solid #C9C6B6"></div>
<div class="ab" style="left:56px;top:607.6px;width:356px;height:16px;border:1px solid #B9B6A6;border-right-color:#fff;border-bottom-color:#fff;background:#F0EEE4"></div>
<div class="t" style="left:59px;top:609.6px">Count: 36</div>
<div class="ab" style="left:624px;top:607.6px;width:97px;height:16px;border:1px solid #B9B6A6;border-right-color:#fff;border-bottom-color:#fff;background:#F0EEE4"></div>
<div class="t" style="left:627px;top:609.6px">0h 0m</div>
<div class="ab" style="left:723px;top:607.6px;width:67px;height:16px;border:1px solid #B9B6A6;border-right-color:#fff;border-bottom-color:#fff;background:#F0EEE4"></div>
<div class="t" style="left:726px;top:609.6px">0h 0m</div>
<div class="ab" style="left:791px;top:61px;width:14px;height:564px;background:#F6F5F1"></div>
<div class="ab" style="left:792.5px;top:75px;width:10.5px;height:303.5px;border-radius:2px;background:linear-gradient(90deg,#B9CAF5,#C9D8FC 45%,#B7C8F2)"></div>
<div class="ab" style="left:795.5px;top:222px;width:5px;height:6px;background-image:linear-gradient(#EEF4FE 50%,transparent 50%);background-size:5px 2px;opacity:.8"></div>
<div class="ab" style="left:792.5px;top:61.5px;width:10.5px;height:11.5px;border-radius:2px;background:linear-gradient(135deg,#D6E1FD,#B7C8F2)"></div>
<svg class="ab" style="left:792.5px;top:61.5px" width="11" height="13"><path d="M2.6 7.2 L5.3 4.4 L8 7.2" fill="none" stroke="#3E5694" stroke-width="1.6"/></svg>
<div class="ab" style="left:792.5px;top:612.3px;width:10.5px;height:11.5px;border-radius:2px;background:linear-gradient(135deg,#D6E1FD,#B7C8F2)"></div>
<svg class="ab" style="left:792.5px;top:612.3px" width="11" height="13"><path d="M2.6 4.2 L5.3 7 L8 4.2" fill="none" stroke="#3E5694" stroke-width="1.6"/></svg>
<div class="ab" style="left:804.5px;top:61px;width:2.5px;height:565px;background:#B9C7DE"></div>
<div class="ab" style="left:0;top:624.6px;width:806px;height:1.7px;background:#A5B2C8"></div>
<div class="ab" style="left:807.5px;top:62px;width:179px;height:15px;border:1px solid #C9C6B6;border-radius:3px;background:linear-gradient(#FDFDFB,#F1EFE6)"></div>
<div class="t" style="left:810px;top:63.8px">Categories Bar</div>
<div class="ab" style="left:949.5px;top:65px;width:9px;height:9px;border-radius:1.5px;background:#2F66D2"></div><div class="ab" style="left:952px;top:67.5px;width:4px;height:4px;border:1px solid #fff"></div>
<svg class="ab" style="left:962px;top:64.5px" width="10" height="10" viewBox="0 0 10 10"><path d="M2 1.2 H8 M3.2 1.2 V5 M6.8 1.2 V5 M1 5.2 H9 M5 5.2 V9.5" fill="none" stroke="#2F62C8" stroke-width="1.2"/></svg>
<div class="ab" style="left:974.5px;top:65px;width:9.5px;height:9.5px;border-radius:1.5px;background:#D8482A"></div><svg class="ab" style="left:974.5px;top:65px" width="10" height="10"><path d="M2.5 2.5 L7 7 M7 2.5 L2.5 7" stroke="#fff" stroke-width="1.5"/></svg>
<div class="ab" style="left:807px;top:78px;width:180px;height:22px;background:linear-gradient(#F6F5EF,#ECE9D8 80%,#E3DFCB)"></div>
<div class="grip" style="left:810.2px;top:84.6px;height:13px"></div>
<svg class="ab" style="left:818px;top:83px" width="13" height="13" viewBox="0 0 13 13"><rect x="0.4" y="2.8" width="10.4" height="9" fill="#FBFCFE" stroke="#D5DDEC" stroke-width=".6"/><rect x="0.3" y="2.6" width="10.6" height="1.6" fill="#4A8ADC"/><path d="M0.3 12 H10.9" stroke="#8C9CB8" stroke-width="1"/><path d="M6.5 3.2 H10" stroke="#3FAE4A" stroke-width="1.4"/><path d="M9 0.8 L11.8 3.2 L9 5.6 Z" fill="#3FAE4A"/></svg>
<svg class="ab" style="left:836px;top:83px" width="13" height="13" viewBox="0 0 13 13"><rect x="2.2" y="3.8" width="3.2" height="2.4" rx=".6" fill="#4C7CDC"/><rect x="2.2" y="6.8" width="3.2" height="2.4" rx=".6" fill="#4C7CDC"/><rect x="2.2" y="9.8" width="3.2" height="2.4" rx=".6" fill="#4C7CDC"/><rect x="6.2" y="3.8" width="3.2" height="2.4" rx=".6" fill="#4C7CDC"/><rect x="6.2" y="6.8" width="3.2" height="2.4" rx=".6" fill="#4C7CDC"/><rect x="6.2" y="9.8" width="3.2" height="2.4" rx=".6" fill="#4C7CDC"/><rect x="0.6" y="2.2" width="4" height="2" rx=".6" fill="#3C6CD0"/><path d="M5.4 4 V11 M1.8 4 V11" stroke="#3C6CD0" stroke-width=".7"/><path d="M8.6 2.6 H12.6 M10.6 0.6 V4.6" stroke="#3FAE4A" stroke-width="1.5"/></svg>
<svg class="ab" style="left:855.3px;top:83px" width="13" height="13" viewBox="0 0 13 13"><rect x="0.4" y="2.8" width="10.4" height="9" fill="#FBFCFE" stroke="#D5DDEC" stroke-width=".6"/><rect x="0.3" y="2.6" width="10.6" height="1.6" fill="#4A8ADC"/><path d="M0.3 12 H10.9" stroke="#8C9CB8" stroke-width="1"/><path d="M3.6 9.6 L9.6 2.2 L11 3.3 L5 10.6 Z" fill="#EBCB84" stroke="#B89040" stroke-width=".4"/><path d="M9.6 2.2 L10.6 1 L12 2.1 L11 3.3 Z" fill="#E0503C"/><path d="M3.6 9.6 L3.2 11.2 L5 10.6 Z" fill="#806040"/></svg>
<svg class="ab" style="left:874px;top:83px" width="13" height="13" viewBox="0 0 13 13"><rect x="0.4" y="2.8" width="10.4" height="9" fill="#FBFCFE" stroke="#D5DDEC" stroke-width=".6"/><rect x="0.3" y="2.6" width="10.6" height="1.6" fill="#4A8ADC"/><path d="M0.3 12 H10.9" stroke="#8C9CB8" stroke-width="1"/><path d="M6.6 6.8 L11.8 12.6 M11.8 6.8 L6.6 12.6" stroke="#DC4434" stroke-width="1.3"/></svg>
<svg class="ab" style="left:890.3px;top:93.5px" width="6" height="4"><path d="M0.6 0 L4.6 0 L2.6 2.6 Z" fill="#000"/></svg>
<div class="ab" style="left:807px;top:101.3px;width:180px;height:204.7px;background:#fff;border:1px solid #A9B6CB;border-left-width:1.6px;border-top-width:1.4px"></div>
<div class="ab" style="left:808.5px;top:102.5px;width:177.5px;height:13px;background:linear-gradient(#EFEDDE 0,#ECE9D8 70%,#D8D4C2 100%)"></div>
<div class="ab" style="left:944.5px;top:104px;width:1px;height:10px;background:#C0BDAC;box-shadow:1px 0 0 #fff"></div><div class="ab" style="left:963.5px;top:104px;width:1px;height:10px;background:#C0BDAC;box-shadow:1px 0 0 #fff"></div>
<div class="t" style="left:949px;top:103px;color:#333">J...</div><div class="t" style="left:968px;top:103px;color:#333">T...</div>
<div class="ab" style="left:814.6px;top:123px;width:0;height:56px;border-left:1px dotted #CDCDCD"></div>
<svg width="0" height="0" style="position:absolute"><defs><radialGradient id="smg" cx=".38" cy=".32" r=".75"><stop offset="0" stop-color="#FFFA78"/><stop offset=".55" stop-color="#F8E42C"/><stop offset="1" stop-color="#E8A818"/></radialGradient></defs></svg>
<div class="ab" style="left:815px;top:123.4px;width:8px;height:0;border-top:1px dotted #CDCDCD"></div>
<svg class="ab" style="left:824px;top:117.4px" width="13" height="13" viewBox="0 0 13 13"><circle cx="6.5" cy="6.5" r="6" fill="url(#smg)" stroke="#DCA81C" stroke-width=".5"/><ellipse cx="4.7" cy="4.6" rx=".8" ry="1.1" fill="#3A2C00"/><ellipse cx="8.1" cy="4.6" rx=".8" ry="1.1" fill="#3A2C00"/><path d="M3.2 7.4 Q6.4 10.4 9.6 7.4" fill="none" stroke="#8A6000" stroke-width=".8"/></svg>
<div class="t" style="left:840px;top:119.1px;width:110.6px;overflow:hidden;font-weight:bold;font-size:9.6px;letter-spacing:.12px">A Month Before Hanukk</div>
<div class="t r" style="left:945px;top:119.1px;width:17.5px;font-weight:bold;font-size:10px">12</div>
<div class="t r" style="left:962px;top:119.1px;width:23.5px;font-weight:bold;font-size:10px;overflow:hidden">12</div>
<div class="ab" style="left:815px;top:137.20000000000002px;width:8px;height:0;border-top:1px dotted #CDCDCD"></div>
<svg class="ab" style="left:824px;top:131.20000000000002px" width="13" height="13" viewBox="0 0 13 13"><circle cx="6.5" cy="6.5" r="6" fill="url(#smg)" stroke="#DCA81C" stroke-width=".5"/><ellipse cx="4.7" cy="4.6" rx=".8" ry="1.1" fill="#3A2C00"/><ellipse cx="8.1" cy="4.6" rx=".8" ry="1.1" fill="#3A2C00"/><path d="M3.2 7.4 Q6.4 10.4 9.6 7.4" fill="none" stroke="#8A6000" stroke-width=".8"/></svg>
<div class="t" style="left:840px;top:132.9px;width:110.6px;overflow:hidden;font-weight:bold;font-size:9.6px;letter-spacing:.12px">Two Weeks Before Han</div>
<div class="t r" style="left:945px;top:132.9px;width:17.5px;font-weight:bold;font-size:10px">9</div>
<div class="t r" style="left:962px;top:132.9px;width:23.5px;font-weight:bold;font-size:10px;overflow:hidden">9</div>
<div class="ab" style="left:815px;top:151.0px;width:8px;height:0;border-top:1px dotted #CDCDCD"></div>
<svg class="ab" style="left:824px;top:145.0px" width="13" height="13" viewBox="0 0 13 13"><circle cx="6.5" cy="6.5" r="6" fill="url(#smg)" stroke="#DCA81C" stroke-width=".5"/><ellipse cx="4.7" cy="4.6" rx=".8" ry="1.1" fill="#3A2C00"/><ellipse cx="8.1" cy="4.6" rx=".8" ry="1.1" fill="#3A2C00"/><path d="M3.2 7.4 Q6.4 10.4 9.6 7.4" fill="none" stroke="#8A6000" stroke-width=".8"/></svg>
<div class="t" style="left:840px;top:146.7px;width:110.6px;overflow:hidden;font-weight:bold;font-size:9.6px;letter-spacing:.12px">Several Days Before Ha</div>
<div class="t r" style="left:945px;top:146.7px;width:17.5px;font-weight:bold;font-size:10px">4</div>
<div class="t r" style="left:962px;top:146.7px;width:23.5px;font-weight:bold;font-size:10px;overflow:hidden">4</div>
<div class="ab" style="left:815px;top:164.8px;width:8px;height:0;border-top:1px dotted #CDCDCD"></div>
<svg class="ab" style="left:824px;top:158.8px" width="13" height="13" viewBox="0 0 13 13"><circle cx="6.5" cy="6.5" r="6" fill="url(#smg)" stroke="#DCA81C" stroke-width=".5"/><ellipse cx="4.7" cy="4.6" rx=".8" ry="1.1" fill="#3A2C00"/><ellipse cx="8.1" cy="4.6" rx=".8" ry="1.1" fill="#3A2C00"/><path d="M3.2 7.4 Q6.4 10.4 9.6 7.4" fill="none" stroke="#8A6000" stroke-width=".8"/></svg>
<div class="t" style="left:840px;top:160.1px;width:110.6px;overflow:hidden;font-weight:bold;font-size:9.6px;letter-spacing:.12px">During Hanukkah</div>
<div class="t r" style="left:945px;top:160.1px;width:17.5px;font-weight:bold;font-size:10px">9</div>
<div class="t r" style="left:962px;top:160.1px;width:23.5px;font-weight:bold;font-size:10px;overflow:hidden">9</div>
<div class="ab" style="left:815px;top:178.60000000000002px;width:8px;height:0;border-top:1px dotted #CDCDCD"></div>
<div class="ab" style="left:945px;top:173.10000000000002px;width:41px;height:12.5px;background:#ECE9D8"></div>
<div class="ab" style="left:822.5px;top:172.3px;width:164px;height:13.8px;border:1px solid #222"></div>
<svg class="ab" style="left:824px;top:172.60000000000002px" width="13" height="13" viewBox="0 0 13 13"><circle cx="6.5" cy="6.5" r="6" fill="url(#smg)" stroke="#DCA81C" stroke-width=".5"/><ellipse cx="4.7" cy="4.6" rx=".8" ry="1.1" fill="#3A2C00"/><ellipse cx="8.1" cy="4.6" rx=".8" ry="1.1" fill="#3A2C00"/><path d="M3.2 7.4 Q6.4 10.4 9.6 7.4" fill="none" stroke="#8A6000" stroke-width=".8"/></svg>
<div class="t" style="left:840px;top:174.6px;width:110.6px;overflow:hidden;font-weight:bold;font-size:9.6px;letter-spacing:.12px">After Hanukkah</div>
<div class="t r" style="left:945px;top:174.6px;width:17.5px;font-weight:bold;font-size:10px">2</div>
<div class="t r" style="left:962px;top:174.6px;width:23.5px;font-weight:bold;font-size:10px;overflow:hidden">2</div>
<div class="ab" style="left:807.5px;top:310.5px;width:179px;height:15px;border:1px solid #C9C6B6;border-radius:3px;background:linear-gradient(#FDFDFB,#F1EFE6)"></div>
<div class="t" style="left:810px;top:312.3px">Filters Bar</div>
<div class="ab" style="left:949.5px;top:313.5px;width:9px;height:9px;border-radius:1.5px;background:#2F66D2"></div><div class="ab" style="left:952px;top:316.0px;width:4px;height:4px;border:1px solid #fff"></div>
<svg class="ab" style="left:962px;top:313.0px" width="10" height="10" viewBox="0 0 10 10"><path d="M2 1.2 H8 M3.2 1.2 V5 M6.8 1.2 V5 M1 5.2 H9 M5 5.2 V9.5" fill="none" stroke="#2F62C8" stroke-width="1.2"/></svg>
<div class="ab" style="left:974.5px;top:313.5px;width:9.5px;height:9.5px;border-radius:1.5px;background:#D8482A"></div><svg class="ab" style="left:974.5px;top:313.5px" width="10" height="10"><path d="M2.5 2.5 L7 7 M7 2.5 L2.5 7" stroke="#fff" stroke-width="1.5"/></svg>
<div class="ab" style="left:807px;top:326.5px;width:180px;height:23px;background:linear-gradient(#F6F5EF,#ECE9D8 80%,#E3DFCB)"></div>
<div class="grip" style="left:810.2px;top:332.6px;height:13px"></div>
<div class="ab" style="left:814px;top:331.5px;width:71.5px;height:15px;border:1px solid #B9C6DA;background:#F2F1EA"></div>
<div class="t" style="left:817px;top:333px;color:#ACA899">Custom</div>
<svg class="ab" style="left:875px;top:335px" width="9" height="8"><path d="M1.5 2 L4.5 5.2 L7.5 2" fill="none" stroke="#BDBAAA" stroke-width="1.4"/></svg>
<svg class="ab" style="left:889.5px;top:332.5px" width="13" height="13" viewBox="0 0 13 13"><path d="M4.6 1 H9.6 L11.6 3 V8.6 H4.6 Z" fill="#DCE8FA" stroke="#9CB4E0" stroke-width=".7"/><path d="M1 4.6 V11.4 H3.4 V9" fill="none" stroke="#5C7CD0" stroke-width="1.3"/><path d="M3.6 11.2 L9.8 3.8 L11.4 5.2 L5.2 12.4 Z" fill="#3FAE4A"/><circle cx="10.8" cy="4.2" r="1.2" fill="#3FAE4A"/></svg>
<svg class="ab" style="left:903px;top:337px" width="6" height="4"><path d="M0.6 0 L4.6 0 L2.6 2.6 Z" fill="#000"/></svg>
<svg class="ab" style="left:914px;top:333px" width="14" height="12" viewBox="0 0 14 12"><path d="M1.5 8 L8 1.5 L12.5 4.5 L6.5 10.5 H3 Z" fill="#F4F4F2" stroke="#A0A098" stroke-width=".9"/><path d="M3 10.8 H11" stroke="#A0A098" stroke-width=".9"/></svg>
<svg class="ab" style="left:934.5px;top:333.5px" width="11" height="11" viewBox="0 0 11 11"><path d="M1.5 1.5 L9.5 9.5 M9.5 1.5 L1.5 9.5" stroke="#A8A8A0" stroke-width="2.2"/></svg>
<svg class="ab" style="left:951px;top:342.5px" width="6" height="4"><path d="M0.6 0 L4.6 0 L2.6 2.6 Z" fill="#000"/></svg>
<div class="ab" style="left:807.5px;top:350px;width:179.5px;height:400px;border:1px solid #AEB9CC;background:#ECE9D8"></div>
<div class="ab" style="left:808.5px;top:366.4px;width:177.5px;height:0;border-top:1px dotted #C2BFAE"></div>
<div class="t" style="left:820px;top:352.8px;width:65px;overflow:hidden">Completion</div>
<div class="dd" style="left:973px;top:353.5px;width:11.5px;height:11px;opacity:1"><svg width="11.5" height="11" viewBox="0 0 10 10" preserveAspectRatio="none"><path d="M2.3 3.5 L5 6.3 L7.7 3.5" fill="none" stroke="#31497C" stroke-width="1.5"/></svg></div>
<div class="ab" style="left:808.5px;top:382.6px;width:177.5px;height:0;border-top:1px dotted #C2BFAE"></div>
<div class="t" style="left:820px;top:369.0px;width:65px;overflow:hidden">Due Date</div>
<div class="dd" style="left:973px;top:369.7px;width:11.5px;height:11px;opacity:1"><svg width="11.5" height="11" viewBox="0 0 10 10" preserveAspectRatio="none"><path d="M2.3 3.5 L5 6.3 L7.7 3.5" fill="none" stroke="#31497C" stroke-width="1.5"/></svg></div>
<div class="ab" style="left:808.5px;top:398.8px;width:177.5px;height:0;border-top:1px dotted #C2BFAE"></div>
<div class="t" style="left:820px;top:385.2px;width:65px;overflow:hidden">Status</div>
<div class="dd" style="left:973px;top:385.9px;width:11.5px;height:11px;opacity:1"><svg width="11.5" height="11" viewBox="0 0 10 10" preserveAspectRatio="none"><path d="M2.3 3.5 L5 6.3 L7.7 3.5" fill="none" stroke="#31497C" stroke-width="1.5"/></svg></div>
<div class="ab" style="left:808.5px;top:415.0px;width:177.5px;height:0;border-top:1px dotted #C2BFAE"></div>
<div class="t" style="left:820px;top:401.4px;width:65px;overflow:hidden">Priority</div>
<div class="dd" style="left:973px;top:402.1px;width:11.5px;height:11px;opacity:1"><svg width="11.5" height="11" viewBox="0 0 10 10" preserveAspectRatio="none"><path d="M2.3 3.5 L5 6.3 L7.7 3.5" fill="none" stroke="#31497C" stroke-width="1.5"/></svg></div>
<div class="ab" style="left:808.5px;top:431.2px;width:177.5px;height:0;border-top:1px dotted #C2BFAE"></div>
<div class="t" style="left:820px;top:417.6px;width:65px;overflow:hidden">Task Name</div>
<div class="ab" style="left:808.5px;top:447.4px;width:177.5px;height:0;border-top:1px dotted #C2BFAE"></div>
<div class="t" style="left:820px;top:433.8px;width:65px;overflow:hidden">Date Created</div>
<div class="dd" style="left:973px;top:434.5px;width:11.5px;height:11px;opacity:1"><svg width="11.5" height="11" viewBox="0 0 10 10" preserveAspectRatio="none"><path d="M2.3 3.5 L5 6.3 L7.7 3.5" fill="none" stroke="#31497C" stroke-width="1.5"/></svg></div>
<div class="ab" style="left:808.5px;top:463.6px;width:177.5px;height:0;border-top:1px dotted #C2BFAE"></div>
<div class="t" style="left:820px;top:450.0px;width:65px;overflow:hidden">Date Last Modifie</div>
<div class="dd" style="left:973px;top:450.7px;width:11.5px;height:11px;opacity:1"><svg width="11.5" height="11" viewBox="0 0 10 10" preserveAspectRatio="none"><path d="M2.3 3.5 L5 6.3 L7.7 3.5" fill="none" stroke="#31497C" stroke-width="1.5"/></svg></div>
<div class="ab" style="left:808.5px;top:479.8px;width:177.5px;height:0;border-top:1px dotted #C2BFAE"></div>
<div class="t" style="left:820px;top:466.2px;width:65px;overflow:hidden">Date Opened</div>
<div class="dd" style="left:973px;top:466.9px;width:11.5px;height:11px;opacity:1"><svg width="11.5" height="11" viewBox="0 0 10 10" preserveAspectRatio="none"><path d="M2.3 3.5 L5 6.3 L7.7 3.5" fill="none" stroke="#31497C" stroke-width="1.5"/></svg></div>
<div class="ab" style="left:808.5px;top:496.0px;width:177.5px;height:0;border-top:1px dotted #C2BFAE"></div>
<div class="t" style="left:820px;top:482.4px;width:65px;overflow:hidden">Date Completed</div>
<div class="dd" style="left:973px;top:483.1px;width:11.5px;height:11px;opacity:1"><svg width="11.5" height="11" viewBox="0 0 10 10" preserveAspectRatio="none"><path d="M2.3 3.5 L5 6.3 L7.7 3.5" fill="none" stroke="#31497C" stroke-width="1.5"/></svg></div>
<div class="ab" style="left:884px;top:351px;width:1px;height:146px;background:#C2BFAE"></div>
<div class="ab" style="left:808.5px;top:497px;width:177.5px;height:1px;background:#B8B5A5"></div>
<div class="ab" style="left:0;top:626.5px;width:807px;height:2.5px;background:#F4F3EC"></div>
<div class="ab" style="left:0;top:626.5px;width:805px;height:18px;background:#F6F5EF"></div><div class="ab" style="left:3px;top:628.4px;width:801px;height:15.2px;border-radius:2.5px;background:linear-gradient(#D8E0F9,#CFD8F5)"></div>
<div class="t" style="left:5px;top:630px">Note</div>
<svg class="ab" style="left:778px;top:631px" width="10" height="10" viewBox="0 0 10 10"><path d="M2 1.2 H8 M3.2 1.2 V5 M6.8 1.2 V5 M1 5.2 H9 M5 5.2 V9.5" fill="none" stroke="#2F62C8" stroke-width="1.2"/></svg>
<div class="ab" style="left:790.2px;top:631.3px;width:9.5px;height:9.5px;border-radius:1.5px;background:#D8482A"></div><svg class="ab" style="left:790.2px;top:631.3px" width="10" height="10"><path d="M2.5 2.5 L7 7 M7 2.5 L2.5 7" stroke="#fff" stroke-width="1.5"/></svg>
<div class="ab" style="left:0;top:644px;width:805px;height:23px;background:linear-gradient(#F6F5EF,#ECE9D8 80%,#E3DFCB)"></div>
<div class="grip" style="left:5px;top:650.5px;height:14px"></div>
<svg class="ab" style="left:13px;top:650px" width="13" height="13" viewBox="0 0 13 13"><path d="M4.6 1 H9.6 L11.6 3 V8.6 H4.6 Z" fill="#E4E6EA" stroke="#B8BCC4" stroke-width=".7"/><path d="M1 4.6 V11.4 H3.4 V9" fill="none" stroke="#A4A8B0" stroke-width="1.3"/><path d="M3.6 11.2 L9.8 3.8 L11.4 5.2 L5.2 12.4 Z" fill="#B4B8BC"/><circle cx="10.8" cy="4.2" r="1.2" fill="#B4B8BC"/></svg>
<div class="sep" style="left:31px;top:648px;height:16px"></div>
<div class="sep" style="left:74px;top:648px;height:16px"></div>
<div class="sep" style="left:132px;top:648px;height:16px"></div>
<div class="sep" style="left:429px;top:648px;height:16px"></div>
<div class="sep" style="left:452.5px;top:648px;height:16px"></div>
<svg class="ab" style="left:37px;top:649.5px" width="13" height="14" viewBox="0 0 12 14"><rect x="1" y="0.8" width="9.5" height="12" fill="#fff" stroke="#9AA8C4" stroke-width=".8"/><rect x="2.6" y="3" width="5" height="5" fill="#BCD4F4"/><circle cx="7" cy="7" r="2.6" fill="#DDEBFB" stroke="#7E9CCB" stroke-width=".9"/><path d="M8.8 9 L11 11.6" stroke="#D89030" stroke-width="1.5"/></svg>
<svg class="ab" style="left:56px;top:649.5px" width="13" height="14" viewBox="0 0 13 14"><rect x="3" y="0.8" width="7" height="4" fill="#fff" stroke="#8A96AE" stroke-width=".8"/><rect x="0.8" y="4.5" width="11.4" height="5.2" rx="1" fill="#E2E7F0" stroke="#93A0BA" stroke-width=".8"/><rect x="2.6" y="8.5" width="7.8" height="4.5" fill="#fff" stroke="#8A96AE" stroke-width=".8"/></svg>
<div class="ab" style="left:80px;top:650.5px;width:11.5px;height:11.5px;border:1.2px solid #5CA0E8;border-radius:2px;background:#CFE4FB;color:#3A74CC;font-family:'Liberation Serif',serif;font-size:9px;line-height:9.5px;text-align:center;font-weight:bold">B</div>
<div class="ab" style="left:95.5px;top:646.5px;width:18px;height:18.5px;border:1px solid #9CA8BC;border-radius:3px;background:#FDFDFE"></div>
<div class="ab" style="left:99px;top:650.5px;width:11.5px;height:11.5px;border:1.2px solid #5CA0E8;border-radius:2px;background:#CFE4FB;color:#3A74CC;font-family:'Liberation Serif',serif;font-size:9px;line-height:9.5px;text-align:center;font-style:italic;font-weight:bold">I</div>
<div class="ab" style="left:117.5px;top:650.5px;width:11.5px;height:11.5px;border:1.2px solid #5CA0E8;border-radius:2px;background:#CFE4FB;color:#3A74CC;font-family:'Liberation Serif',serif;font-size:9px;line-height:9.5px;text-align:center;text-decoration:underline">U</div>
<div class="ab" style="left:137px;top:649px;width:71px;height:14.5px;background:#fff"></div>
<div class="t" style="left:149px;top:650.3px;width:52.1px;overflow:hidden">Tahoma</div>
<div class="dd" style="left:198px;top:649.5px;width:10px;height:13.5px;opacity:1"><svg width="10" height="13.5" viewBox="0 0 10 10" preserveAspectRatio="none"><path d="M2.3 3.5 L5 6.3 L7.7 3.5" fill="none" stroke="#31497C" stroke-width="1.5"/></svg></div>
<div class="t" style="left:138.5px;top:650.3px;font-family:'Liberation Serif',serif;font-weight:bold;font-size:9.5px;letter-spacing:-2.5px">TT</div>
<div class="ab" style="left:210px;top:649px;width:72px;height:14.5px;background:#fff"></div>
<div class="t" style="left:212px;top:650.3px;width:63.8px;overflow:hidden"><span style="letter-spacing:-.45px">DEFAULT_CHAR</span></div>
<div class="dd" style="left:272px;top:649.5px;width:10px;height:13.5px;opacity:1"><svg width="10" height="13.5" viewBox="0 0 10 10" preserveAspectRatio="none"><path d="M2.3 3.5 L5 6.3 L7.7 3.5" fill="none" stroke="#31497C" stroke-width="1.5"/></svg></div>
<div class="ab" style="left:285px;top:649px;width:74px;height:14.5px;background:#fff"></div>
<div class="t" style="left:308px;top:650.3px;width:43.6px;overflow:hidden">Black</div>
<div class="dd" style="left:349px;top:649.5px;width:10px;height:13.5px;opacity:1"><svg width="10" height="13.5" viewBox="0 0 10 10" preserveAspectRatio="none"><path d="M2.3 3.5 L5 6.3 L7.7 3.5" fill="none" stroke="#31497C" stroke-width="1.5"/></svg></div>
<div class="ab" style="left:285.5px;top:650.5px;width:20.5px;height:11.5px;background:#000"></div>
<div class="ab" style="left:364.5px;top:650.5px;width:11.5px;height:11.5px;border:1px solid #5F9AE0;border-radius:2px;background:#DDEBFB"></div>
<svg class="ab" style="left:364.5px;top:650.5px" width="12" height="12"><text x="1.6" y="9" font-family="Liberation Sans" font-size="7.5" font-weight="bold" fill="#3E9A50">A</text><path d="M7.6 3.2 L7.6 8.2 M6.2 4.6 L7.6 3 L9 4.6" fill="none" stroke="#D04A30" stroke-width=".9"/></svg>
<div class="ab" style="left:383px;top:650.5px;width:11.5px;height:11.5px;border:1px solid #5F9AE0;border-radius:2px;background:#DDEBFB"></div>
<svg class="ab" style="left:383px;top:650.5px" width="12" height="12"><text x="1.6" y="9" font-family="Liberation Sans" font-size="7.5" font-weight="bold" fill="#3E9A50">A</text><path d="M7.6 3 L7.6 8 M6.2 6.6 L7.6 8.2 L9 6.6" fill="none" stroke="#D04A30" stroke-width=".9"/></svg>
<div class="ab" style="left:397.5px;top:649px;width:26.5px;height:14.5px;background:#fff"></div>
<div class="dd" style="left:414px;top:649.5px;width:10px;height:13.5px;opacity:1"><svg width="10" height="13.5" viewBox="0 0 10 10" preserveAspectRatio="none"><path d="M2.3 3.5 L5 6.3 L7.7 3.5" fill="none" stroke="#31497C" stroke-width="1.5"/></svg></div>
<div class="ab" style="left:435.5px;top:650.5px;width:11.5px;height:11.5px;border:1px solid #4FAE7C;border-radius:2px;background:#DDF3E6"></div>
<svg class="ab" style="left:435.5px;top:650.5px" width="12" height="12"><rect x="2.5" y="2.6" width="6" height="1" fill="#2E9A5C"/><rect x="2.5" y="4.5" width="4" height="1" fill="#2E9A5C"/><rect x="2.5" y="6.4" width="6" height="1" fill="#2E9A5C"/><rect x="2.5" y="8.299999999999999" width="4" height="1" fill="#2E9A5C"/></svg>
<div class="ab" style="left:459px;top:650.5px;width:11.5px;height:11.5px;border:1px solid #4FAE7C;border-radius:2px;background:#DDF3E6"></div>
<svg class="ab" style="left:459px;top:650.5px" width="12" height="12"><rect x="2.5" y="2.6" width="6" height="1" fill="#2E9A5C"/><rect x="3.5" y="4.5" width="4" height="1" fill="#2E9A5C"/><rect x="2.5" y="6.4" width="6" height="1" fill="#2E9A5C"/><rect x="3.5" y="8.299999999999999" width="4" height="1" fill="#2E9A5C"/></svg>
<div class="ab" style="left:477.5px;top:650.5px;width:11.5px;height:11.5px;border:1px solid #4FAE7C;border-radius:2px;background:#DDF3E6"></div>
<svg class="ab" style="left:477.5px;top:650.5px" width="12" height="12"><rect x="2.5" y="2.6" width="6" height="1" fill="#2E9A5C"/><rect x="4.5" y="4.5" width="4" height="1" fill="#2E9A5C"/><rect x="2.5" y="6.4" width="6" height="1" fill="#2E9A5C"/><rect x="4.5" y="8.299999999999999" width="4" height="1" fill="#2E9A5C"/></svg>
<svg class="ab" style="left:496px;top:651px" width="12" height="11"><circle cx="1.8" cy="1.8" r="1.3" fill="#3858B0"/><circle cx="1.8" cy="5.5" r="1.3" fill="#3858B0"/><circle cx="1.8" cy="9.2" r="1.3" fill="#3858B0"/><path d="M4.5 1.8 H11.5 M4.5 5.5 H11.5 M4.5 9.2 H11.5" stroke="#3A9A48" stroke-width="1.3"/></svg>
<svg class="ab" style="left:512.5px;top:660px" width="6" height="4"><path d="M0.6 0 L4.6 0 L2.6 2.6 Z" fill="#000"/></svg>
<div class="ab" style="left:2px;top:667px;width:802.5px;height:60.5px;background:#fff;border:1px solid #9DB4D2"></div>
<div class="ab" id="ed" style="left:23px;top:670.5px;width:780px;font-family:'Liberation Serif',serif;font-style:italic;font-size:11.6px;line-height:14.5px;white-space:pre;color:#000;transform:scaleX(1.07);transform-origin:0 0;-webkit-text-stroke:.08px #000">In some families the gifts are given on each night of the holiday, so in total it’s eight gifts. In other families it is customary to give one big gift to each family
member. So, decide what way suits your family most of all</div>
<div class="ab" style="left:0;top:728px;width:805px;height:24px;background:linear-gradient(#F7F6F2,#F0EEE4)"></div>
<div class="ab" style="left:2px;top:730.5px;width:802px;height:1px;background:#B8B5A8"></div>
<div class="ab" style="left:5px;top:730.5px;width:23.5px;height:18.5px;background:#FCFCFA;border:1px solid #B8B5A8;border-top:none;border-bottom:2px solid #F0A030;border-radius:0 0 3px 3px"></div>
<div class="t" style="left:8px;top:734px">Note</div>
<div class="ab" style="left:30px;top:731.5px;width:54px;height:17.5px;background:#FCFCFA;border:1px solid #B8B5A8;border-radius:0 0 3px 3px"></div>
<div class="t" style="left:32px;top:734px;transform:scaleX(.915)">Search result</div>
<div class="ab" style="left:0;top:752px;width:989px;height:16px;background:linear-gradient(#C9C6B8 0,#E4E1D2 12%,#ECE9D8 40%,#E6E3D2 100%)"></div>
<div class="t" style="left:789px;top:748.5px;font-family:'Liberation Mono',monospace;font-size:15px;line-height:18px;height:18px;color:#3A0A0A;transform:scaleX(1.111);word-spacing:0;-webkit-text-stroke:.55px #3A0A0A">www.todolistsoft.com</div>
</div></body></html>
